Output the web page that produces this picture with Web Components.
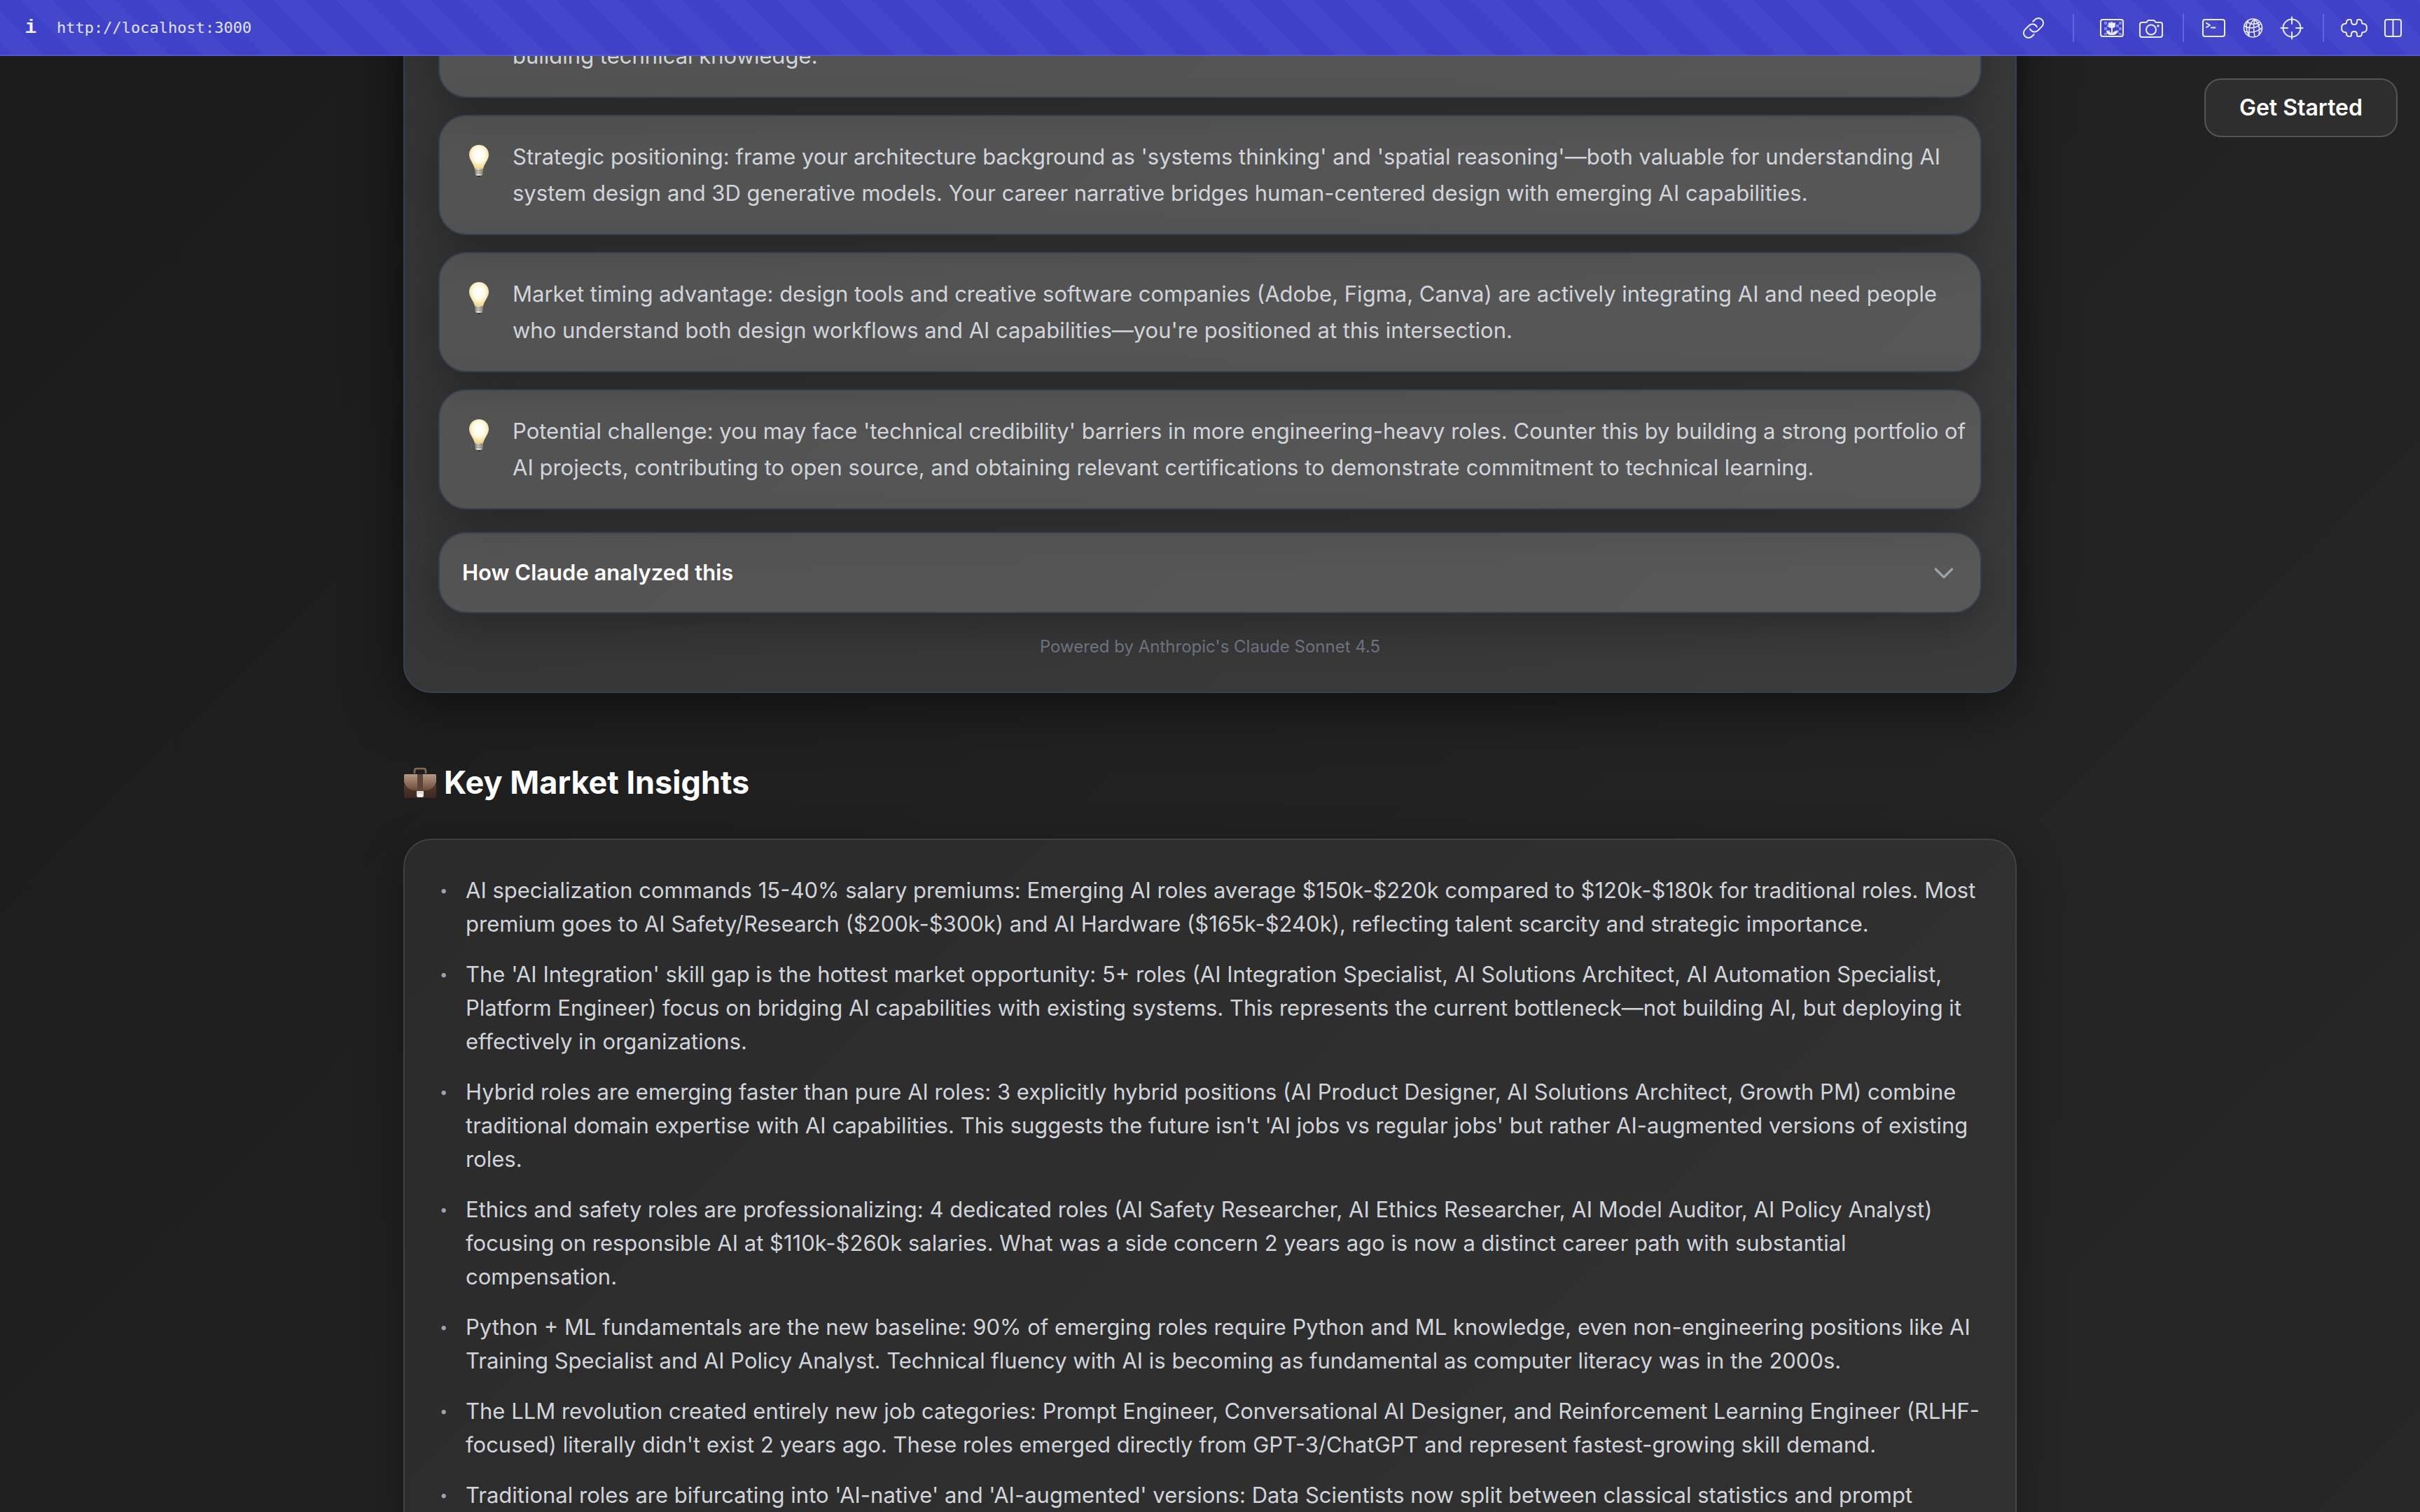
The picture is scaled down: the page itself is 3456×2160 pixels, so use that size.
<!DOCTYPE html>
<html lang="en">
<head>
<meta charset="utf-8">
<title>Career Insights</title>
<style>
  html, body { margin: 0; height: 100%; background: #1c1c1c; }
  body { font-family: Inter, "Liberation Sans", sans-serif; font-size: 31px; color: #d1d5db; overflow: hidden; }
</style>
</head>
<body>
<app-shell>
  <dev-toolbar slot="toolbar"></dev-toolbar>
  <glass-button slot="action">Get Started</glass-button>

  <analysis-panel>
    <tip-card><br>building technical knowledge.</tip-card>
    <tip-card>Strategic positioning: frame your architecture background as 'systems thinking' and 'spatial reasoning'—both valuable for understanding AI<br>system design and 3D generative models. Your career narrative bridges human-centered design with emerging AI capabilities.</tip-card>
    <tip-card>Market timing advantage: design tools and creative software companies (Adobe, Figma, Canva) are actively integrating AI and need people<br>who understand both design workflows and AI capabilities—you're positioned at this intersection.</tip-card>
    <tip-card>Potential challenge: you may face 'technical credibility' barriers in more engineering-heavy roles. Counter this by building a strong portfolio of<br>AI projects, contributing to open source, and obtaining relevant certifications to demonstrate commitment to technical learning.</tip-card>
    <disclosure-row slot="details">How Claude analyzed this</disclosure-row>
    <span slot="credit">Powered by Anthropic's Claude Sonnet 4.5</span>
  </analysis-panel>

  <section-title>Key Market Insights</section-title>

  <insight-list>
    <insight-item>AI specialization commands 15-40% salary premiums: Emerging AI roles average $150k-$220k compared to $120k-$180k for traditional roles. Most<br>premium goes to AI Safety/Research ($200k-$300k) and AI Hardware ($165k-$240k), reflecting talent scarcity and strategic importance.</insight-item>
    <insight-item>The 'AI Integration' skill gap is the hottest market opportunity: 5+ roles (AI Integration Specialist, AI Solutions Architect, AI Automation Specialist,<br>Platform Engineer) focus on bridging AI capabilities with existing systems. This represents the current bottleneck—not building AI, but deploying it<br>effectively in organizations.</insight-item>
    <insight-item>Hybrid roles are emerging faster than pure AI roles: 3 explicitly hybrid positions (AI Product Designer, AI Solutions Architect, Growth PM) combine<br>traditional domain expertise with AI capabilities. This suggests the future isn't 'AI jobs vs regular jobs' but rather AI-augmented versions of existing<br>roles.</insight-item>
    <insight-item>Ethics and safety roles are professionalizing: 4 dedicated roles (AI Safety Researcher, AI Ethics Researcher, AI Model Auditor, AI Policy Analyst)<br>focusing on responsible AI at $110k-$260k salaries. What was a side concern 2 years ago is now a distinct career path with substantial<br>compensation.</insight-item>
    <insight-item>Python + ML fundamentals are the new baseline: 90% of emerging roles require Python and ML knowledge, even non-engineering positions like AI<br>Training Specialist and AI Policy Analyst. Technical fluency with AI is becoming as fundamental as computer literacy was in the 2000s.</insight-item>
    <insight-item>The LLM revolution created entirely new job categories: Prompt Engineer, Conversational AI Designer, and Reinforcement Learning Engineer (RLHF-<br>focused) literally didn't exist 2 years ago. These roles emerged directly from GPT-3/ChatGPT and represent fastest-growing skill demand.</insight-item>
    <insight-item>Traditional roles are bifurcating into 'AI-native' and 'AI-augmented' versions: Data Scientists now split between classical statistics and prompt</insight-item>
  </insight-list>
</app-shell>

<script>
const define = (name, html) => {
  const template = document.createElement('template');
  template.innerHTML = html;
  customElements.define(name, class extends HTMLElement {
    constructor() {
      super();
      this.attachShadow({ mode: 'open' }).append(template.content.cloneNode(true));
    }
  });
};

define('app-shell', `
<style>
  :host { display: flex; flex-direction: column; height: 100vh; }
  .viewport { position: relative; flex: 1; min-height: 0; overflow: hidden; background: linear-gradient(135deg, #1b1b1b, #272727); }
  /* the document is scrolled part-way down */
  main { max-width: 2304px; margin: -162px auto 0; }
  .action { position: absolute; top: 32px; right: 32px; }
</style>
<slot name="toolbar"></slot>
<div class="viewport">
  <main><slot></slot></main>
  <div class="action"><slot name="action"></slot></div>
</div>`);

define('icon-button', `
<style>
  :host { display: block; }
  button { all: unset; display: flex; align-items: center; justify-content: center; width: 40px; height: 40px; color: #ececff; cursor: pointer; }
</style>
<button><slot></slot></button>`);

define('dev-toolbar', `
<style>
  :host {
    display: flex; align-items: center; box-sizing: border-box; height: 80px; padding: 2px 18px 0 32px;
    border-bottom: 2px solid #5355d2; color: #e2e3fc;
    background: linear-gradient(45deg, #3f41c8 25%, #4447cc 25% 50%, #3f41c8 50% 75%, #4447cc 75%) -15px 0 / 90px 90px #3f41c8;
    font: 22px/32px "DejaVu Sans Mono", "Liberation Mono", monospace;
  }
  .info { width: 24px; text-align: center; font-weight: 700; font-size: 28px; color: #f2f2ff; font-family: "Liberation Mono", monospace; }
  .url { margin-left: 25px; flex: 1; color: inherit; text-decoration: none; }
  .group { display: flex; gap: 15px; }
  hr { width: 2px; height: 40px; margin: 0 24px; border: 0; background: #6163e4; }
  hr.wide { margin: 0 36px; }
  svg { display: block; fill: none; stroke: currentColor; stroke-width: 2; stroke-linecap: round; stroke-linejoin: round; }
  svg.fine { stroke-width: 1.6; }
</style>
<span class="info">i</span>
<a class="url" href="http://localhost:3000">http://localhost:3000</a>
<div class="group">
  <icon-button aria-label="Copy link"><svg width="40" height="40"><g transform="rotate(-45 20 20)"><path d="M14 27h-4a7 7 0 0 1 0-14h8a7 7 0 0 1 6.500 9.500M26 13h4a7 7 0 0 1 0 14h-8a7 7 0 0 1-6.500-9.500"/></g></svg></icon-button>
</div>
<hr class="wide">
<div class="group">
  <icon-button aria-label="Image"><svg width="40" height="40"><g fill="#8587e4" stroke="none"><path d="M7 11h4v4H7zM11 15h4v4h-4zM7 19h4v4H7zM11 23h4v4h-4zM7 27h4v3H7zM15 11h3v3h-3zM28 11h4v4h-4zM24 15h4v4h-4zM28 19h4v4h-4zM24 23h4v4h-4zM28 27h4v3h-4z"/></g><rect x="2" y="8" width="32" height="24" rx="3"/><g fill="currentColor" stroke="none"><path d="M13 12l3 1 2-2 2 2 3-1v4c0 3-2 4-4 4V30h-2V20c-2 0-4-1-4-4z"/><path d="M17.500 30c-5 0-7-2-7.500-6 5 0 7 2 7.500 6zM18.500 30c5 0 7-2 7.500-6-5 0-7 2-7.500 6z"/></g></svg></icon-button>
  <icon-button aria-label="Screenshot"><svg width="40" height="40"><path d="M6 12h5.500q1 0 1.500-1l1-1q.7-1 2-1h6q1.300 0 2 1l1 1q.5 1 1.500 1H32q3 0 3 3v15q0 3-3 3H6q-3 0-3-3V15q0-3 3-3z"/><circle cx="19" cy="22.500" r="7"/><circle cx="29" cy="17" r="1.700" fill="currentColor" stroke="none"/></svg></icon-button>
</div>
<hr>
<div class="group">
  <icon-button aria-label="Console"><svg width="40" height="40"><rect x="3" y="8" width="31" height="24" rx="3"/><path d="M8 13l5 3-5 3M15 19.500h5.500"/></svg></icon-button>
  <icon-button aria-label="Network"><svg class="fine" width="40" height="40"><circle cx="19.500" cy="20" r="13"/><path d="M22 8c-7 3-9 11-8 24M22 8c-2 7-2 15 0 24M22 8c6 5 8 12 6 22M12 10c1 5 10 6 16 2M7 17c7 5 18 3 23-3M8 25c7 2 18 1 24-5M12 10c-3 5-3 11 1 20"/></svg></icon-button>
  <icon-button aria-label="Inspect"><svg width="40" height="40"><circle cx="20" cy="20" r="12.500"/><path d="M20 4.500V14M20 26v9.500M4.500 20H14M26 20h9.500"/></svg></icon-button>
</div>
<hr>
<div class="group">
  <icon-button aria-label="Extensions"><svg width="40" height="40"><path d="M8 12q0-4 4-4h1q2 0 2 2v1q0 4 4 4t4-4v-1q0-2 2-2h1q4 0 4 4 0 2 2 2 5 0 5 6t-5 6q-2 0-2 2 0 4-4 4h-1q-2 0-2-2v-1q0-4-4-4t-4 4v1q0 2-2 2h-1q-4 0-4-4 0-2-2-2-5 0-5-6t5-6q2 0 2-2z"/></svg></icon-button>
  <icon-button aria-label="Split view"><svg width="40" height="40"><rect x="8" y="8" width="23" height="24" rx="3"/><path d="M19.500 8v24"/></svg></icon-button>
</div>`);

define('glass-button', `
<style>
  :host { display: block; }
  button { display: block; box-sizing: border-box; height: 84px; padding: 0 48px; border: 2px solid #555; border-radius: 24px; background: #2e2e2e; color: #fff; font: 600 32px/48px Inter, "Liberation Sans", sans-serif; cursor: pointer; }
</style>
<button><slot></slot></button>`);

define('analysis-panel', `
<style>
  :host { display: flex; flex-direction: column; box-sizing: border-box; padding: 48px; border: 2px solid #374151; border-radius: 40px; background: rgba(255,255,255,.11); box-shadow: 0 16px 80px rgba(0,0,0,.55); }
  .tips { display: flex; flex-direction: column; gap: 24px; margin-bottom: 32px; }
  .credit { margin: 32px 0 0; text-align: center; font-size: 24px; line-height: 32px; color: #6b7280; }
</style>
<div class="tips"><slot></slot></div>
<slot name="details"></slot>
<p class="credit"><slot name="credit"></slot></p>`);

define('tip-card', `
<style>
  :host { display: flex; align-items: flex-start; gap: 24px; padding: 32px; border: 2px solid #374151; border-radius: 40px; background: rgba(255,255,255,.15); box-shadow: 0 16px 64px rgba(0,0,0,.3); color: #d1d5db; }
  svg { display: block; flex: none; }
  p { margin: 0; line-height: 52px; white-space: nowrap; }
</style>
<svg width="48" height="56" viewBox="0 0 48 56" aria-hidden="true">
  <defs>
    <radialGradient id="g" cx=".5" cy=".42" r=".6"><stop offset="0" stop-color="#fff"/><stop offset=".5" stop-color="#fffbe8"/><stop offset="1" stop-color="#efd27c"/></radialGradient>
    <linearGradient id="b"><stop offset="0" stop-color="#8f8a80"/><stop offset=".4" stop-color="#e4e0d6"/><stop offset="1" stop-color="#8d887d"/></linearGradient>
  </defs>
  <path d="M24 9c8 0 14 6 14 14 0 7-6 12-8 20H18c-2-8-8-13-8-20 0-8 6-14 14-14z" fill="url(#g)"/>
  <path d="M18 43h12l-1 9q-5 3-10 0z" fill="url(#b)"/>
  <path d="M18.500 46h11M19 49h10" stroke="#77736a" stroke-width="1"/>
  <path d="M21 53h6l-2 2h-2z" fill="#333"/>
</svg>
<p><slot></slot></p>`);

define('disclosure-row', `
<style>
  :host { display: block; }
  button { display: flex; align-items: center; justify-content: space-between; box-sizing: border-box; width: 100%; height: 116px; padding: 0 32px; border: 2px solid #374151; border-radius: 40px; background: rgba(255,255,255,.15); box-shadow: 0 16px 64px rgba(0,0,0,.3); color: #fff; font: 600 31px/48px Inter, "Liberation Sans", sans-serif; cursor: pointer; }
</style>
<button aria-expanded="false"><slot></slot>
  <svg width="40" height="40" viewBox="0 0 24 24" fill="none" stroke="#9ca3af" stroke-width="2" stroke-linecap="round" stroke-linejoin="round" aria-hidden="true"><path d="M19 9l-7 7-7-7"/></svg>
</button>`);

define('section-title', `
<style>
  :host { display: block; margin: 96px 0 48px; }
  h2 { display: flex; align-items: center; gap: 10px; margin: 0; font-size: 45px; line-height: 64px; font-weight: 700; color: #fff; }
  svg { flex: none; }
</style>
<h2>
  <svg width="48" height="48" viewBox="0 0 48 48" aria-hidden="true">
    <defs>
      <linearGradient id="t" x2="0" y2="1"><stop offset="0" stop-color="#b59a84"/><stop offset="1" stop-color="#67483a"/></linearGradient>
      <linearGradient id="u" x2="0" y2="1"><stop offset="0" stop-color="#6a4b3b"/><stop offset="1" stop-color="#3c271f"/></linearGradient>
    </defs>
    <path d="M16 11V7q0-3 3-3h10q3 0 3 3v4" fill="none" stroke="#8b6a55" stroke-width="2.500"/>
    <rect x="1" y="12" width="46" height="34" rx="2" fill="url(#u)"/>
    <path d="M3 12h42q2 0 2 2v10q-3 11-15 12H16Q4 35 1 24V14q0-2 2-2z" fill="url(#t)"/>
    <path d="M1 24q3 11 15 12h16q12-1 15-12" fill="none" stroke="#3d281f" stroke-width="1"/>
    <path d="M20 12h8v24h-8z" fill="#5f4435"/>
    <path d="M19 36h10v7q0 2-2 2h-6q-2 0-2-2z" fill="#dcdcda"/>
    <path d="M21 40h6v4h-6z" fill="#fff"/>
  </svg>
  <slot></slot>
</h2>`);

define('insight-list', `
<style>
  :host { display: flex; flex-direction: column; gap: 24px; padding: 48px; border: 2px solid rgba(255,255,255,.15); border-radius: 40px; background: rgba(255,255,255,.055); background-clip: padding-box; box-shadow: 0 16px 64px rgba(0,0,0,.3); }
</style>
<slot></slot>`);

define('insight-item', `
<style>
  :host { display: flex; color: #d1d5db; line-height: 48px; }
  .dot { flex: none; width: 39px; box-sizing: border-box; padding-left: 2px; color: #9ca3af; font-size: 20px; }
  p { margin: 0; white-space: nowrap; }
</style>
<span class="dot">•</span><p><slot></slot></p>`);
</script>
</body>
</html>
